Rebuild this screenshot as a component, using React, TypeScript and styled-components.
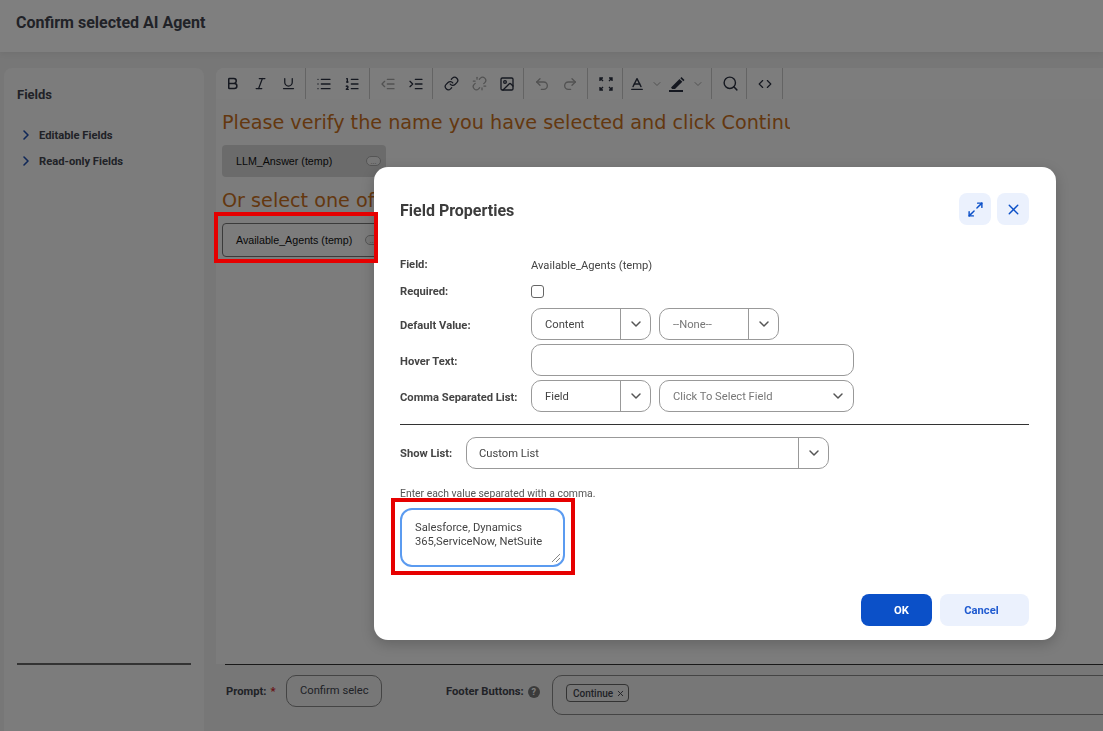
import React from 'react'
import styled, { createGlobalStyle } from 'styled-components'
import {
  Bold, Italic, Underline, List, ListOrdered, Outdent, Indent, Link, Unlink, Image,
  Undo2, Redo2, Baseline, Search, ChevronDown, ChevronRight, X, Maximize2, Code,
} from 'lucide-react'

const Global = createGlobalStyle`
  html, body { margin: 0; height: 100%; overflow: hidden; background: #eeeeee; }
  * { box-sizing: border-box; }
  body { font-family: Roboto, "Liberation Sans", sans-serif; color: #333; }
`

const Page = styled.div`
  width: 1103px;
  height: 731px;
  display: flex;
  flex-direction: column;
  overflow: hidden;
`

const Header = styled.header`
  height: 52px;
  flex: none;
  background: #fff;
  padding: 14px 16px 0;
  font-size: 16px;
  font-weight: 700;
  line-height: 18px;
  color: #42454f;
  box-shadow: 0 2px 6px rgba(0, 0, 0, 0.06);
`

const Body = styled.div`
  flex: 1;
  display: flex;
  gap: 12px;
  padding: 16px 0 0 4px;
  min-height: 0;
`

const Sidebar = styled.aside`
  width: 200px;
  flex: none;
  background: #f8f8f8;
  border-radius: 8px 8px 0 0;
  padding: 19px 13px 0 13px;
  display: flex;
  flex-direction: column;
`

const SideTitle = styled.div`
  font-size: 13px;
  font-weight: 700;
  line-height: 16px;
  color: #42454f;
  margin-bottom: 19px;
`

const Tree = styled.div`
  display: flex;
  align-items: center;
  gap: 5px;
  height: 26px;
  padding-left: 1px;
  font-size: 11.2px;
  font-weight: 700;
  color: #42454f;
  svg { color: #1f4fb0; }
`

const SideRule = styled.div`
  margin-top: auto;
  margin-bottom: 66px;
  height: 2px;
  background: #666;
`

const Main = styled.main`
  flex: 1;
  min-width: 0;
  display: flex;
  flex-direction: column;
`

const Editor = styled.section`
  flex: 1;
  background: #f8f8f8;
  border-radius: 8px 8px 0 0;
`

const Toolbar = styled.div`
  height: 31px;
  display: flex;
  background: #fbfbfb;
  border-radius: 8px 0 0 0;
  color: #2a3040;
`

const ToolGroup = styled.div<{ $pl?: number; $pr?: number }>`
  display: flex;
  align-items: center;
  padding: 0 ${p => p.$pr ?? 3}px 0 ${p => p.$pl ?? 4}px;
  border-right: 1px solid #c9c9c9;
`

const ToolButton = styled.span<{ $muted?: boolean; $w?: number }>`
  width: ${p => p.$w ?? 28}px;
  height: 28px;
  display: flex;
  align-items: center;
  justify-content: center;
  color: ${p => (p.$muted ? '#a4a4a4' : '#2a3040')};
`

const EditorBody = styled.div`
  padding: 11px 0 0 6px;
  width: 574px;
  overflow: hidden;
`

const Heading = styled.div`
  font-family: "DejaVu Sans", Verdana, sans-serif;
  font-size: 19.2px;
  line-height: 26px;
  color: #c8701e;
  white-space: nowrap;
`

const FieldChip = styled.div<{ $filled?: boolean }>`
  width: 164px;
  height: ${p => (p.$filled ? 32 : 34)}px;
  margin: ${p => (p.$filled ? '9px 0 11px' : '9px 0 0')};
  padding: 0 5px 0 ${p => (p.$filled ? 14 : 13)}px;
  display: flex;
  align-items: center;
  justify-content: space-between;
  border-radius: 4px;
  font-family: "Liberation Sans", Arial, sans-serif;
  font-size: 10.7px;
  color: #111;
  background: ${p => (p.$filled ? '#d6d6d6' : '#f8f8f8')};
  border: ${p => (p.$filled ? 'none' : '1px solid #777')};
`

const ChipDots = styled.span`
  width: 15px;
  height: 10px;
  border: 1px solid #aaa;
  border-radius: 5px;
  background: #eee;
  display: flex;
  align-items: center;
  justify-content: center;
  font-size: 7px;
  line-height: 7px;
  color: #888;
`

const Footer = styled.div`
  height: 67px;
  flex: none;
  margin-left: 9px;
  border-top: 1px solid #333;
  padding: 10px 0 0 1px;
  display: flex;
  align-items: flex-start;
  font-size: 11.2px;
  font-weight: 700;
  color: #42454f;
`

const FooterLabel = styled.div<{ $w: number }>`
  width: ${p => p.$w}px;
  flex: none;
  height: 32px;
  padding-top: 1px;
  display: flex;
  align-items: center;
  gap: 4px;
`

const Star = styled.span`
  color: #d21f2b;
`

const HelpDot = styled.span`
  width: 12px;
  height: 12px;
  border-radius: 50%;
  background: #777;
  color: #fff;
  font-size: 9px;
  display: flex;
  align-items: center;
  justify-content: center;
`

const PromptBox = styled.div`
  width: 96px;
  height: 32px;
  flex: none;
  margin-right: 64px;
  border: 1px solid #888;
  border-radius: 10px;
  padding: 0 0 2px 13px;
  display: flex;
  align-items: center;
  font-size: 11.2px;
  font-weight: 400;
  white-space: nowrap;
  overflow: hidden;
`

const FooterBox = styled.div`
  flex: 1;
  height: 40px;
  margin-right: -20px;
  border: 1px solid #888;
  border-radius: 10px;
  padding: 8px 13px;
`

const Tag = styled.span`
  display: inline-flex;
  align-items: center;
  gap: 3px;
  height: 18px;
  padding: 0 3px 0 6px;
  border: 1px solid #666;
  border-radius: 4px;
  font-size: 10px;
  font-weight: 500;
`

const Overlay = styled.div`
  position: fixed;
  inset: 0;
  background: rgba(0, 0, 0, 0.5);
`

const Modal = styled.div`
  position: absolute;
  left: 374px;
  top: 167px;
  width: 682px;
  height: 473px;
  background: #fff;
  border-radius: 14px;
  padding: 26px 27px 0 26px;
  box-shadow: 0 4px 14px rgba(0, 0, 0, 0.2);
  color: #333;
`

const ModalHead = styled.div`
  display: flex;
  align-items: center;
  gap: 6px;
  height: 32px;
  margin-bottom: 29px;
`

const ModalTitle = styled.h2`
  flex: 1;
  margin: 0;
  padding-top: 2px;
  font-size: 16px;
  font-weight: 700;
  color: #3c3c3c;
`

const IconButton = styled.button`
  width: 32px;
  height: 32px;
  padding: 0;
  border: none;
  border-radius: 8px;
  background: #ebf1fd;
  color: #0b50c8;
  display: flex;
  align-items: center;
  justify-content: center;
`

const Row = styled.div<{ $h?: number; $gap?: number }>`
  display: flex;
  align-items: center;
  height: ${p => p.$h ?? 32}px;
  margin-bottom: ${p => p.$gap ?? 4}px;
`

const Label = styled.label<{ $w?: number; $low?: boolean }>`
  width: ${p => p.$w ?? 131}px;
  flex: none;
  padding-top: ${p => (p.$low ? 2 : 0)}px;
  font-size: 11.2px;
  font-weight: 700;
  color: #444;
`

const Value = styled.span`
  padding-top: 2px;
  font-size: 11.2px;
  color: #444;
`

const Check = styled.span`
  width: 13px;
  height: 13px;
  border: 1px solid #666;
  border-radius: 3px;
`

const Select = styled.div<{ $w: number; $plain?: boolean; $muted?: boolean; $mr?: number; $pl?: number }>`
  width: ${p => p.$w}px;
  height: 32px;
  flex: none;
  margin-right: ${p => p.$mr ?? 0}px;
  display: flex;
  align-items: center;
  border: 1px solid #999;
  border-radius: 10px;
  font-size: 11.2px;
  color: ${p => (p.$muted ? '#777' : '#444')};
  span { flex: 1; padding-left: ${p => p.$pl ?? 13}px; }
  i {
    width: 30px;
    height: 100%;
    flex: none;
    display: flex;
    align-items: center;
    justify-content: center;
    color: #555;
    border-left: ${p => (p.$plain ? 'none' : '1px solid #999')};
  }
`

const TextInput = styled.div`
  width: 323px;
  height: 32px;
  border: 1px solid #999;
  border-radius: 10px;
`

const Rule = styled.hr`
  margin: 12px 0 12px;
  border: none;
  height: 1px;
  background: #333;
`

const Hint = styled.div`
  margin: 19px 0 8px;
  font-size: 10.4px;
  line-height: 12px;
  color: #555;
`

const ValuesBox = styled.div`
  position: relative;
  width: 165px;
  height: 59px;
  border: 2px solid #5b9bf0;
  border-radius: 12px;
  padding: 11px 13px;
  font-size: 11.2px;
  line-height: 14px;
  color: #444;
`

const ResizeGrip = styled.svg`
  position: absolute;
  right: 2px;
  bottom: 2px;
`

const Actions = styled.div`
  display: flex;
  justify-content: flex-end;
  gap: 8px;
  margin-top: 27px;
`

const ActionButton = styled.button<{ $primary?: boolean; $w: number }>`
  width: ${p => p.$w}px;
  height: 32px;
  border: none;
  border-radius: 8px;
  padding: ${p => (p.$primary ? '1px 0 0 10px' : '1px 6px 0 0')};
  font-family: inherit;
  font-size: 11.2px;
  font-weight: 700;
  background: ${p => (p.$primary ? '#0b50c8' : '#ebf1fd')};
  color: ${p => (p.$primary ? '#fff' : '#1f5ad0')};
`

const Callout = styled.div<{ $x: number; $y: number; $w: number; $h: number }>`
  position: absolute;
  left: ${p => p.$x}px;
  top: ${p => p.$y}px;
  width: ${p => p.$w}px;
  height: ${p => p.$h}px;
  border: 4px solid #e60000;
  pointer-events: none;
`

function FullscreenIcon() {
  return (
    <svg width="16" height="16" viewBox="0 0 16 16" fill="none" stroke="currentColor" strokeWidth="1.4">
      <path d="M2 5V2h3M2 2l3 3M14 5V2h-3M14 2l-3 3M2 11v3h3M2 14l3-3M14 11v3h-3M14 14l-3-3" />
    </svg>
  )
}

function PenIcon() {
  return (
    <svg width="18" height="18" viewBox="0 0 18 18" fill="currentColor">
      <path d="M4 11.5 11.5 4l2.8 2.8L7 14H4.2L3 12.8z" />
      <path d="M12.3 3.2 13.5 2l3 3-1.2 1.2z" />
      <rect x="1" y="15" width="14" height="2" />
    </svg>
  )
}

export default function App() {
  return (
    <>
      <Global />
      <Page>
        <Header>Confirm selected AI Agent</Header>
        <Body>
          <Sidebar>
            <SideTitle>Fields</SideTitle>
            <Tree><ChevronRight size={16} strokeWidth={2.4} />Editable Fields</Tree>
            <Tree><ChevronRight size={16} strokeWidth={2.4} />Read-only Fields</Tree>
            <SideRule />
          </Sidebar>
          <Main>
            <Editor>
              <Toolbar>
                <ToolGroup $pl={2}>
                  <ToolButton><Bold size={15} strokeWidth={2.4} /></ToolButton>
                  <ToolButton><Italic size={15} /></ToolButton>
                  <ToolButton><Underline size={15} /></ToolButton>
                </ToolGroup>
                <ToolGroup>
                  <ToolButton><List size={16} /></ToolButton>
                  <ToolButton><ListOrdered size={16} /></ToolButton>
                </ToolGroup>
                <ToolGroup $pr={2}>
                  <ToolButton $muted><Outdent size={16} /></ToolButton>
                  <ToolButton><Indent size={16} /></ToolButton>
                </ToolGroup>
                <ToolGroup $pr={2}>
                  <ToolButton><Link size={15} /></ToolButton>
                  <ToolButton $muted><Unlink size={15} /></ToolButton>
                  <ToolButton><Image size={16} /></ToolButton>
                </ToolGroup>
                <ToolGroup>
                  <ToolButton $muted><Undo2 size={16} /></ToolButton>
                  <ToolButton $muted><Redo2 size={16} /></ToolButton>
                </ToolGroup>
                <ToolGroup $pr={2}>
                  <ToolButton><FullscreenIcon /></ToolButton>
                </ToolGroup>
                <ToolGroup $pr={2}>
                  <ToolButton $w={20}><Baseline size={16} /></ToolButton>
                  <ToolButton $w={20} $muted><ChevronDown size={12} /></ToolButton>
                  <ToolButton $w={20}><PenIcon /></ToolButton>
                  <ToolButton $w={22} $muted><ChevronDown size={12} /></ToolButton>
                </ToolGroup>
                <ToolGroup $pr={2}>
                  <ToolButton><Search size={17} /></ToolButton>
                </ToolGroup>
                <ToolGroup>
                  <ToolButton><Code size={14} /></ToolButton>
                </ToolGroup>
              </Toolbar>
              <EditorBody>
                <Heading>Please verify the name you have selected and click Continue</Heading>
                <FieldChip $filled>LLM_Answer (temp)<ChipDots>...</ChipDots></FieldChip>
                <Heading>Or select one of the available agents below</Heading>
                <FieldChip>Available_Agents (temp)<ChipDots>...</ChipDots></FieldChip>
              </EditorBody>
            </Editor>
            <Footer>
              <FooterLabel $w={60}>
                <span>Prompt:</span><Star>*</Star>
              </FooterLabel>
              <PromptBox>Confirm selec</PromptBox>
              <FooterLabel $w={106}>
                <span>Footer Buttons:</span><HelpDot>?</HelpDot>
              </FooterLabel>
              <FooterBox>
                <Tag>Continue <X size={9} strokeWidth={2.5} /></Tag>
              </FooterBox>
            </Footer>
          </Main>
        </Body>
      </Page>
      <Overlay />
      <Modal>
        <ModalHead>
          <ModalTitle>Field Properties</ModalTitle>
          <IconButton aria-label="Expand"><Maximize2 size={17} strokeWidth={2} /></IconButton>
          <IconButton aria-label="Close"><X size={17} strokeWidth={2} /></IconButton>
        </ModalHead>
        <Row $h={20} $gap={7}>
          <Label>Field:</Label>
          <Value>Available_Agents (temp)</Value>
        </Row>
        <Row $h={20} $gap={7}>
          <Label>Required:</Label>
          <Check />
        </Row>
        <Row>
          <Label $low>Default Value:</Label>
          <Select $w={120} $mr={8}><span>Content</span><i><ChevronDown size={16} strokeWidth={2.2} /></i></Select>
          <Select $w={120} $muted><span>--None--</span><i><ChevronDown size={16} strokeWidth={2.2} /></i></Select>
        </Row>
        <Row>
          <Label $low>Hover Text:</Label>
          <TextInput />
        </Row>
        <Row $gap={0}>
          <Label $low>Comma Separated List:</Label>
          <Select $w={120} $mr={8}><span>Field</span><i><ChevronDown size={16} strokeWidth={2.2} /></i></Select>
          <Select $w={195} $plain $muted><span>Click To Select Field</span><i><ChevronDown size={16} strokeWidth={2.2} /></i></Select>
        </Row>
        <Rule />
        <Row $gap={0}>
          <Label $w={66}>Show List:</Label>
          <Select $w={363} $pl={12}><span>Custom List</span><i><ChevronDown size={16} strokeWidth={2.2} /></i></Select>
        </Row>
        <Hint>Enter each value separated with a comma.</Hint>
        <ValuesBox>
          Salesforce, Dynamics 365,ServiceNow, NetSuite
          <ResizeGrip width="10" height="10" viewBox="0 0 10 10" stroke="#888">
            <path d="M1 9 9 1M5 9l4-4" />
          </ResizeGrip>
        </ValuesBox>
        <Actions>
          <ActionButton $primary $w={71}>OK</ActionButton>
          <ActionButton $w={89}>Cancel</ActionButton>
        </Actions>
      </Modal>
      <Callout $x={214} $y={212} $w={164} $h={51} />
      <Callout $x={391} $y={498} $w={184} $h={77} />
    </>
  )
}
